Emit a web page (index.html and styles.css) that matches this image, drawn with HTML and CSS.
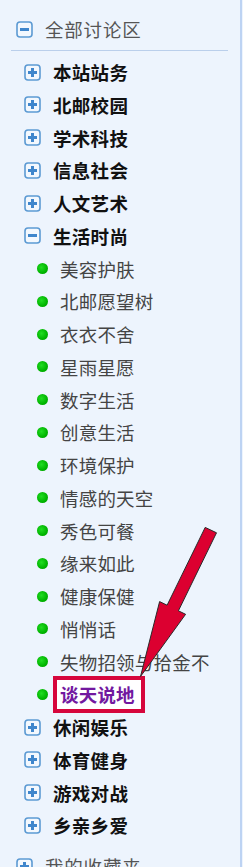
FILE: index.html
```html
<!DOCTYPE html>
<html lang="zh">
<head>
<meta charset="utf-8">
<title>全部讨论区</title>
<link rel="stylesheet" href="styles.css">
</head>
<body>
<div class="panel">
  <div class="row root">
    <svg class="ico" viewBox="0 0 17 17"><rect x="1" y="1" width="15" height="15" rx="3" class="ico-box"/><rect x="4" y="7" width="9" height="3" class="ico-bar"/></svg>
    <span class="root-text">全部讨论区</span>
  </div>
  <div class="sep"></div>
  <div class="list">
    <div class="row group"><svg class="ico" viewBox="0 0 17 17"><rect x="1" y="1" width="15" height="15" rx="3" class="ico-box"/><rect x="4" y="7" width="9" height="3" class="ico-bar"/><rect x="7" y="4" width="3" height="9" class="ico-bar"/></svg><span class="group-text">本站站务</span></div>
    <div class="row group"><svg class="ico" viewBox="0 0 17 17"><rect x="1" y="1" width="15" height="15" rx="3" class="ico-box"/><rect x="4" y="7" width="9" height="3" class="ico-bar"/><rect x="7" y="4" width="3" height="9" class="ico-bar"/></svg><span class="group-text">北邮校园</span></div>
    <div class="row group"><svg class="ico" viewBox="0 0 17 17"><rect x="1" y="1" width="15" height="15" rx="3" class="ico-box"/><rect x="4" y="7" width="9" height="3" class="ico-bar"/><rect x="7" y="4" width="3" height="9" class="ico-bar"/></svg><span class="group-text">学术科技</span></div>
    <div class="row group"><svg class="ico" viewBox="0 0 17 17"><rect x="1" y="1" width="15" height="15" rx="3" class="ico-box"/><rect x="4" y="7" width="9" height="3" class="ico-bar"/><rect x="7" y="4" width="3" height="9" class="ico-bar"/></svg><span class="group-text">信息社会</span></div>
    <div class="row group"><svg class="ico" viewBox="0 0 17 17"><rect x="1" y="1" width="15" height="15" rx="3" class="ico-box"/><rect x="4" y="7" width="9" height="3" class="ico-bar"/><rect x="7" y="4" width="3" height="9" class="ico-bar"/></svg><span class="group-text">人文艺术</span></div>
    <div class="row group"><svg class="ico" viewBox="0 0 17 17"><rect x="1" y="1" width="15" height="15" rx="3" class="ico-box"/><rect x="4" y="7" width="9" height="3" class="ico-bar"/></svg><span class="group-text">生活时尚</span></div>
    <div class="row sub"><span class="dot"></span><span class="sub-text">美容护肤</span></div>
    <div class="row sub"><span class="dot"></span><span class="sub-text">北邮愿望树</span></div>
    <div class="row sub"><span class="dot"></span><span class="sub-text">衣衣不舍</span></div>
    <div class="row sub"><span class="dot"></span><span class="sub-text">星雨星愿</span></div>
    <div class="row sub"><span class="dot"></span><span class="sub-text">数字生活</span></div>
    <div class="row sub"><span class="dot"></span><span class="sub-text">创意生活</span></div>
    <div class="row sub"><span class="dot"></span><span class="sub-text">环境保护</span></div>
    <div class="row sub"><span class="dot"></span><span class="sub-text">情感的天空</span></div>
    <div class="row sub"><span class="dot"></span><span class="sub-text">秀色可餐</span></div>
    <div class="row sub"><span class="dot"></span><span class="sub-text">缘来如此</span></div>
    <div class="row sub"><span class="dot"></span><span class="sub-text">健康保健</span></div>
    <div class="row sub"><span class="dot"></span><span class="sub-text">悄悄话</span></div>
    <div class="row sub"><span class="dot"></span><span class="sub-text">失物招领与拾金不</span></div>
    <div class="row sub selected"><span class="dot"></span><span class="sel-box">谈天说地</span></div>
    <div class="row group"><svg class="ico" viewBox="0 0 17 17"><rect x="1" y="1" width="15" height="15" rx="3" class="ico-box"/><rect x="4" y="7" width="9" height="3" class="ico-bar"/><rect x="7" y="4" width="3" height="9" class="ico-bar"/></svg><span class="group-text">休闲娱乐</span></div>
    <div class="row group"><svg class="ico" viewBox="0 0 17 17"><rect x="1" y="1" width="15" height="15" rx="3" class="ico-box"/><rect x="4" y="7" width="9" height="3" class="ico-bar"/><rect x="7" y="4" width="3" height="9" class="ico-bar"/></svg><span class="group-text">体育健身</span></div>
    <div class="row group"><svg class="ico" viewBox="0 0 17 17"><rect x="1" y="1" width="15" height="15" rx="3" class="ico-box"/><rect x="4" y="7" width="9" height="3" class="ico-bar"/><rect x="7" y="4" width="3" height="9" class="ico-bar"/></svg><span class="group-text">游戏对战</span></div>
    <div class="row group"><svg class="ico" viewBox="0 0 17 17"><rect x="1" y="1" width="15" height="15" rx="3" class="ico-box"/><rect x="4" y="7" width="9" height="3" class="ico-bar"/><rect x="7" y="4" width="3" height="9" class="ico-bar"/></svg><span class="group-text">乡亲乡爱</span></div>
  </div>
  <div class="row root fav">
    <svg class="ico" viewBox="0 0 17 17"><rect x="1" y="1" width="15" height="15" rx="3" class="ico-box"/><rect x="4" y="7" width="9" height="3" class="ico-bar"/><rect x="7" y="4" width="3" height="9" class="ico-bar"/></svg>
    <span class="root-text">我的收藏夹</span>
  </div>
</div>
<svg class="arrow" viewBox="0 0 243 867" width="243" height="867">
  <polygon points="205.2,527.4 216.5,532.8 178.4,610.8 185.6,614.3 140.5,676.5 159.6,601.6 167.1,605.2" class="arrow-shape"/>
</svg>
</body>
</html>
```

FILE: styles.css
```css
html, body {
  margin: 0;
  padding: 0;
}
body {
  width: 243px;
  height: 867px;
  overflow: hidden;
  background: #edf4fd;
  font-family: "Noto Sans CJK SC", "Noto Sans", sans-serif;
  position: relative;
}
.panel {
  width: 240px;
  height: 867px;
  border-right: 2px solid #bdd3f3;
  box-sizing: content-box;
  overflow: hidden;
}
.row {
  display: flex;
  align-items: center;
  height: 32.75px;
  white-space: nowrap;
}
.root {
  padding-left: 16px;
  margin-top: 13px;
}
.root .ico {
  margin-right: 12px;
}
.root-text {
  font-size: 18.5px;
  color: #555555;
  letter-spacing: 0.8px;
}
.sep {
  margin: 4px 0 0 11px;
  width: 217px;
  height: 1px;
  background: #bacfeb;
}
.list {
  padding-top: 5px;
}
.ico {
  width: 17px;
  height: 17px;
  flex: none;
}
.ico-box {
  fill: #f3f8fe;
  stroke: #5c9ad3;
  stroke-width: 1.6;
}
.ico-bar {
  fill: #3f86cc;
}
.group {
  padding-left: 24px;
}
.group .ico {
  margin-right: 12px;
}
.group-text {
  font-size: 18.5px;
  font-weight: 700;
  color: #111111;
  letter-spacing: 0.3px;
}
.sub {
  padding-left: 37px;
}
.dot {
  width: 11px;
  height: 11px;
  border-radius: 50%;
  background: radial-gradient(circle at 40% 40%, #22dd22 0%, #00b400 60%, #009a00 100%);
  flex: none;
  margin-right: 12px;
}
.sub-text {
  font-size: 18.5px;
  color: #444444;
  letter-spacing: 0.2px;
}
.selected .dot {
  margin-right: 5px;
}
.sel-box {
  border: 4px solid #d6063c;
  background: #ffffff;
  padding: 0 6px 0 3px;
  height: 29px;
  line-height: 29px;
  font-size: 18.5px;
  font-weight: 700;
  color: #72189f;
  letter-spacing: 0.2px;
}
.fav {
  margin-top: 8px;
}
.arrow {
  position: absolute;
  left: 0;
  top: 0;
  pointer-events: none;
}
.arrow-shape {
  fill: #dc0030;
  stroke: #2a2a2a;
  stroke-width: 1;
  stroke-linejoin: miter;
}
```
